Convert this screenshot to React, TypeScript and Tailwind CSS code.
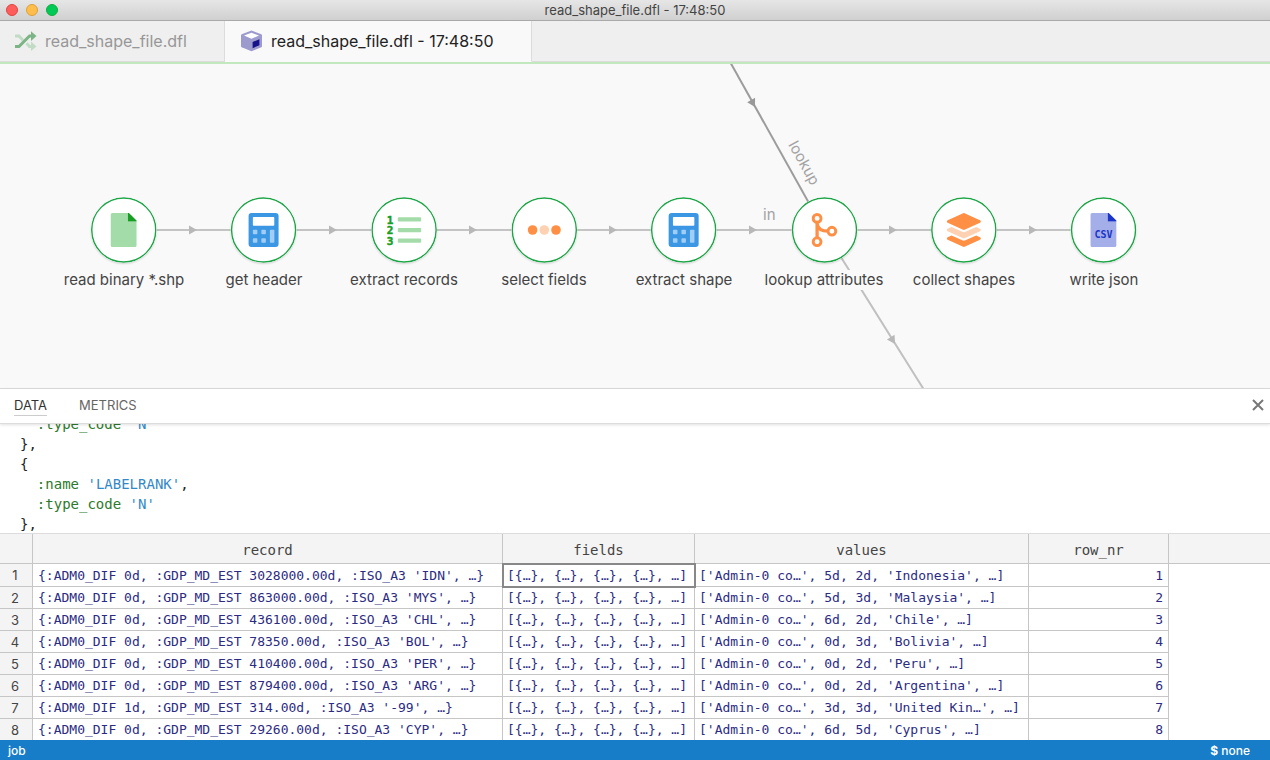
import { type ReactNode } from "react";
import { clsx } from "clsx";

type IconName = "file" | "calculator" | "list" | "dots" | "branch" | "layers" | "csv";

interface FlowNode {
  label: string;
  icon: IconName;
  x: number;
}

/** Vertical centre of the node row, and the node radius, in canvas units. */
const ROW_Y = 166;
const RADIUS = 32;

const NODES: FlowNode[] = [
  { label: "read binary *.shp", icon: "file", x: 124 },
  { label: "get header", icon: "calculator", x: 264 },
  { label: "extract records", icon: "list", x: 404 },
  { label: "select fields", icon: "dots", x: 544 },
  { label: "extract shape", icon: "calculator", x: 684 },
  { label: "lookup attributes", icon: "branch", x: 824 },
  { label: "collect shapes", icon: "layers", x: 964 },
  { label: "write json", icon: "csv", x: 1104 },
];

const FIELDS = "[{…}, {…}, {…}, {…}, …]";

const ROWS = [
  { record: "{:ADM0_DIF 0d, :GDP_MD_EST 3028000.00d, :ISO_A3 'IDN', …}", values: "['Admin-0 co…', 5d, 2d, 'Indonesia', …]" },
  { record: "{:ADM0_DIF 0d, :GDP_MD_EST 863000.00d, :ISO_A3 'MYS', …}", values: "['Admin-0 co…', 5d, 3d, 'Malaysia', …]" },
  { record: "{:ADM0_DIF 0d, :GDP_MD_EST 436100.00d, :ISO_A3 'CHL', …}", values: "['Admin-0 co…', 6d, 2d, 'Chile', …]" },
  { record: "{:ADM0_DIF 0d, :GDP_MD_EST 78350.00d, :ISO_A3 'BOL', …}", values: "['Admin-0 co…', 0d, 3d, 'Bolivia', …]" },
  { record: "{:ADM0_DIF 0d, :GDP_MD_EST 410400.00d, :ISO_A3 'PER', …}", values: "['Admin-0 co…', 0d, 2d, 'Peru', …]" },
  { record: "{:ADM0_DIF 0d, :GDP_MD_EST 879400.00d, :ISO_A3 'ARG', …}", values: "['Admin-0 co…', 0d, 2d, 'Argentina', …]" },
  { record: "{:ADM0_DIF 1d, :GDP_MD_EST 314.00d, :ISO_A3 '-99', …}", values: "['Admin-0 co…', 3d, 3d, 'United Kin…', …]" },
  { record: "{:ADM0_DIF 0d, :GDP_MD_EST 29260.00d, :ISO_A3 'CYP', …}", values: "['Admin-0 co…', 6d, 5d, 'Cyprus', …]" },
];

export default function App() {
  return (
    <div className="flex h-screen flex-col overflow-hidden bg-white font-['Inter',sans-serif] text-[#444]">
      <TitleBar />
      <FileTabs />
      <FlowCanvas />
      <DataPanel />
      <footer className="flex h-5 flex-none items-center justify-between bg-[#177dc9] pl-2 pr-5 pt-px text-xs font-medium text-white">
        <span>job</span>
        <span>
          <b>$</b> none
        </span>
      </footer>
    </div>
  );
}

function TitleBar() {
  return (
    <header className="flex h-[21px] flex-none items-center border-b border-[#a9a9a9] bg-linear-to-b from-[#e6e6e6] to-[#d0d0d0] px-1.5">
      <div className="flex flex-1 gap-2">
        <button type="button" aria-label="Close window" className="size-3 rounded-full border border-[#e0443e] bg-[#ff5c5c]" />
        <button type="button" aria-label="Minimize window" className="size-3 rounded-full border border-[#dea035] bg-[#ffbd4c]" />
        <button type="button" aria-label="Zoom window" className="size-3 rounded-full border border-[#12ac3f] bg-[#00ca56]" />
      </div>
      <h1 className="text-[13px] leading-5">read_shape_file.dfl - 17:48:50</h1>
      <div className="flex-1" />
    </header>
  );
}

function FileTabs() {
  return (
    <nav className="flex h-[43px] flex-none border-b-2 border-[#c1e9bd] bg-[#efefef]">
      <button type="button" className="flex w-[225px] items-center gap-2 border-b border-r border-[#dcdcdc] pl-[15px] text-base text-[#979797]">
        <ShuffleIcon />
        read_shape_file.dfl
      </button>
      <button type="button" className="flex w-[307px] items-center gap-2 border-b border-r border-b-[#f9f9f9] border-r-[#dcdcdc] bg-[#f9f9f9] pl-4 text-base text-[#222]">
        <CubeIcon />
        read_shape_file.dfl - 17:48:50
      </button>
      <div className="flex-1 border-b border-[#dcdcdc]" />
    </nav>
  );
}

function FlowCanvas() {
  return (
    <main className="relative min-h-0 flex-1 overflow-hidden bg-[#f9f9f9]">
      <svg className="absolute inset-0 size-full" aria-hidden="true">
        {NODES.slice(1).map((node) => (
          <g key={node.x}>
            <path d={`M${node.x - 140} ${ROW_Y}H${node.x}`} stroke="#c4c4c4" strokeWidth="2" />
            <Arrow x={node.x - 67} y={ROW_Y} angle={0} color="#b8b8b8" />
          </g>
        ))}
        <path d="M729 -4L824 166" stroke="#9c9c9c" strokeWidth="2" />
        <Arrow x={755} y={43} angle={61} color="#999" />
        <path d="M824 166L926 329" stroke="#c0c0c0" strokeWidth="2" />
        <Arrow x={895} y={280} angle={58} color="#b8b8b8" />
      </svg>

      <span className="absolute left-[763px] top-[141px] text-[15px] leading-5 text-[#a3a3a3]">in</span>
      <span className="absolute left-[804px] top-[99px] -translate-x-1/2 -translate-y-1/2 rotate-[61deg] text-[15px] leading-5 text-[#a3a3a3]">
        lookup
      </span>

      {NODES.map((node) => (
        <div
          key={node.x}
          className="absolute flex -translate-x-1/2 flex-col items-center gap-[7px]"
          style={{ left: node.x, top: ROW_Y - RADIUS - 1 }}
        >
          <svg
            className="size-[66px] rounded-full bg-white shadow-[0_1px_2px_rgba(0,0,0,0.15)]"
            viewBox="-33 -33 66 66"
            aria-hidden="true"
          >
            <circle r={RADIUS} fill="#fff" stroke="#1ba545" strokeWidth="1.4" />
            <NodeIcon name={node.icon} />
          </svg>
          <span className="whitespace-nowrap bg-[#f9f9f9] text-[15px] leading-5">{node.label}</span>
        </div>
      ))}
    </main>
  );
}

function Arrow({ x, y, angle, color }: { x: number; y: number; angle: number; color: string }) {
  return <path d="M0 0L-8 -4.5V4.5Z" fill={color} transform={`translate(${x} ${y}) rotate(${angle})`} />;
}

function DataPanel() {
  return (
    <section className="flex-none border-t border-[#dcdcdc]">
      <div className="relative flex h-[35px] items-start gap-8 border-b border-[#dcdcdc] bg-white px-3.5 pt-1.5 text-[13px] shadow-[0_1px_3px_rgba(0,0,0,0.12)]">
        <button type="button" className="border-b border-[#ccc] leading-5 text-[#333]">DATA</button>
        <button type="button" className="border-b border-transparent leading-5 text-[#666]">METRICS</button>
        <button type="button" aria-label="Close panel" className="-mr-2 ml-auto pt-1">
          <svg className="size-3" viewBox="0 0 12 12" stroke="#777" strokeWidth="2" aria-hidden="true">
            <path d="M1 1L11 11M11 1L1 11" />
          </svg>
        </button>
      </div>

      {/* Pretty-printed value of the selected cell, part way through its scroll */}
      <div className="h-[109px] overflow-hidden">
        <pre className="-mt-2.5 pl-5 font-['DejaVu_Sans_Mono',monospace] text-sm leading-5 text-[#222]">
          {"  "}<Key>:type_code</Key> <Str>'N'</Str>{"\n"}
          {"},\n{\n"}
          {"  "}<Key>:name</Key> <Str>'LABELRANK'</Str>{",\n"}
          {"  "}<Key>:type_code</Key> <Str>'N'</Str>{"\n"}
          {"},"}
        </pre>
      </div>

      <div className="h-[207px] overflow-hidden border-t border-[#dcdcdc]">
        <DataTable />
      </div>
    </section>
  );
}

function Key({ children }: { children: ReactNode }) {
  return <span className="text-[#2c7a2c]">{children}</span>;
}

function Str({ children }: { children: ReactNode }) {
  return <span className="text-[#3388c8]">{children}</span>;
}

function DataTable() {
  const head = "border-b border-r border-[#c6c6c6] pt-0.5 font-normal";
  const cell = "overflow-hidden whitespace-nowrap border-b border-r border-[#c6c6c6]";

  return (
    <table className="w-full table-fixed border-separate border-spacing-0 font-['DejaVu_Sans_Mono',monospace] text-[13px] leading-5 text-[#2b2b83]">
      <colgroup>
        <col className="w-[33px]" />
        <col className="w-[470px]" />
        <col className="w-[192px]" />
        <col className="w-[334px]" />
        <col className="w-[140px]" />
        <col />
      </colgroup>
      <thead>
        <tr className="h-[30px] bg-[#f4f4f4] text-sm text-[#444]">
          <th className={head} aria-label="Row" />
          <th className={head}>record</th>
          <th className={head}>fields</th>
          <th className={head}>values</th>
          <th className={head}>row_nr</th>
          <td className="border-b border-[#c6c6c6]" />
        </tr>
      </thead>
      <tbody>
        {ROWS.map((row, i) => {
          const pad = i === 0 ? "pt-0.5" : "pt-px";
          return (
            <tr key={row.record}>
              <th className="border-b border-r border-[#c6c6c6] bg-[#f4f4f4] pr-0.5 font-['Inter',sans-serif] text-[13px] font-normal leading-5 text-[#444]">
                {i + 1}
              </th>
              <td className={clsx(cell, pad, "pl-[5px]")}>{row.record}</td>
              <td className={clsx(cell, pad, "pl-1", i === 0 && "relative z-10 outline-2 -outline-offset-1 outline-[#888]")}>
                {FIELDS}
              </td>
              <td className={clsx(cell, pad, "pl-1")}>{row.values}</td>
              <td className={clsx(cell, pad, "pr-[5px] text-right")}>{i + 1}</td>
              <td />
            </tr>
          );
        })}
      </tbody>
    </table>
  );
}

/** Node pictograms, drawn around the centre of the circle. */
function NodeIcon({ name }: { name: IconName }) {
  switch (name) {
    case "file":
      return <Sheet body="#a3dba9" fold="#169f22" />;
    case "csv":
      return (
        <>
          <Sheet body="#a4aee8" fold="#1a35c7" />
          <text y="8" textAnchor="middle" fill="#1a35c7" className="font-['DejaVu_Sans_Mono',monospace] text-[10px] font-bold">
            CSV
          </text>
        </>
      );
    case "calculator":
      return (
        <>
          <rect x="-15" y="-17" width="30" height="34" rx="3" fill="#3b96e4" />
          <rect x="-10.7" y="-13" width="21.4" height="8.7" rx="0.8" fill="#fff" />
          <g fill="#a2cdf5">
            <rect x="-10.7" y="-0.3" width="4.5" height="4.5" rx="0.8" />
            <rect x="-2.2" y="-0.3" width="4.5" height="4.5" rx="0.8" />
            <rect x="-10.7" y="8.2" width="4.5" height="4.5" rx="0.8" />
            <rect x="-2.2" y="8.2" width="4.5" height="4.5" rx="0.8" />
            <rect x="6.3" y="-0.3" width="4.5" height="13" rx="0.8" />
          </g>
        </>
      );
    case "list":
      return (
        <>
          <g
            fill="#169f22"
            stroke="#169f22"
            strokeWidth="0.5"
            textAnchor="middle"
            className="font-['DejaVu_Sans_Mono',monospace] text-[11px] font-bold"
          >
            <text x="-14" y="-6.5">1</text>
            <text x="-14" y="4.2">2</text>
            <text x="-14" y="14.8">3</text>
          </g>
          <g fill="#a3dba9">
            <rect x="-6.3" y="-12.7" width="23.3" height="4.3" rx="1" />
            <rect x="-6.3" y="-2.1" width="23.3" height="4.3" rx="1" />
            <rect x="-6.3" y="8.5" width="23.3" height="4.3" rx="1" />
          </g>
        </>
      );
    case "dots":
      return (
        <>
          <circle cx="-11.7" r="4.8" fill="#ff8f45" />
          <circle r="4.8" fill="#ffd1b3" />
          <circle cx="11.7" r="4.8" fill="#ff8f45" />
        </>
      );
    case "branch":
      return (
        <g fill="none" stroke="#ff8f45">
          <path d="M-7.4 -8V8.5M-7.4 -6C-6.5 -1 -3.5 1.2 3.5 1.2" strokeWidth="3.3" />
          <g fill="#fff" strokeWidth="2.9">
            <circle cx="-7.4" cy="-11.6" r="3.9" />
            <circle cx="-7.4" cy="11.7" r="3.9" />
            <circle cx="7.4" cy="1.2" r="3.9" />
          </g>
        </g>
      );
    case "layers":
      return (
        <g fill="#ff8f45" transform="translate(-17 -17) scale(0.0664)">
          <path d="M12.41 148.02l232.94 105.67c6.8 3.09 14.49 3.09 21.29 0l232.94-105.67c16.55-7.51 16.55-32.52 0-40.03L266.65 2.31a25.607 25.607 0 0 0-21.29 0L12.41 107.98c-16.55 7.51-16.55 32.53 0 40.04z" />
          <path
            fill="#ffd1b3"
            d="M499.59 236.3l-58.09-26.33-161.64 73.27c-7.56 3.43-15.59 5.17-23.86 5.17s-16.29-1.74-23.86-5.17L70.51 209.97l-58.1 26.33c-16.55 7.5-16.55 32.5 0 40l232.94 105.59c6.8 3.08 14.49 3.08 21.29 0L499.59 276.3c16.55-7.5 16.55-32.5 0-40z"
          />
          <path d="M499.59 364.1l-57.87-26.23-161.86 73.37c-7.56 3.43-15.59 5.17-23.86 5.17s-16.29-1.74-23.86-5.17L70.29 337.87 12.41 364.1c-16.55 7.5-16.55 32.5 0 40l232.94 105.59c6.8 3.08 14.49 3.08 21.29 0L499.59 404.1c16.55-7.5 16.55-32.5 0-40z" />
        </g>
      );
  }
}

function Sheet({ body, fold }: { body: string; fold: string }) {
  return (
    <>
      <path d="M-11.4 -17H4.2V-8.6H12.8V15.4Q12.8 17 11.2 17H-11.4Q-13 17 -13 15.4V-15.4Q-13 -17 -11.4 -17Z" fill={body} />
      <path d="M4.2 -17H5.2L12.8 -9.4V-8.6H4.2Z" fill={fold} />
    </>
  );
}

function ShuffleIcon() {
  return (
    <svg className="h-5 w-[22px]" viewBox="0 0 22 20" fill="none" strokeWidth="3" aria-hidden="true">
      <g stroke="#c0dcc5">
        <path d="M0 5H4L8 9.2M11.5 12.3L14.5 15.5H17" />
        <path d="M16 10.5L21.5 15.5L16 20Z" fill="#c0dcc5" stroke="none" />
      </g>
      <g stroke="#7bb585">
        <path d="M0 15.5H4L14.5 5H17" />
        <path d="M16 0.2L21.5 5L16 10Z" fill="#7bb585" stroke="none" />
      </g>
    </svg>
  );
}

function CubeIcon() {
  return (
    <svg className="size-[22px]" viewBox="0 0 22 22" aria-hidden="true">
      <path d="M10.5 0.6L20.3 4.2Q21 4.5 21 5.3V16.2Q21 17 20.3 17.3L10.5 21.3L0.7 17.3Q0 17 0 16.2V5.3Q0 4.5 0.7 4.2Z" fill="#9d9bcd" />
      <path d="M10.5 2.8L18 5.5L10.5 8.7L3 5.5Z" fill="#fff" />
      <path d="M11.6 12L18.4 9.2V15.2L11.6 18.2Z" fill="#15128b" />
    </svg>
  );
}
